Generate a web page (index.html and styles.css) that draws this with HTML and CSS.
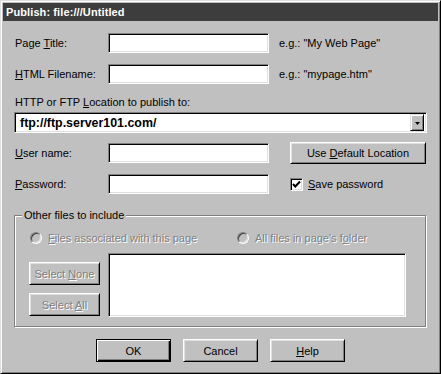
FILE: index.html
```html
<!DOCTYPE html>
<html>
<head>
<meta charset="utf-8">
<link rel="stylesheet" href="styles.css">
</head>
<body>
<div class="window">
  <div class="titlebar">Publish: file:///Untitled</div>
  <div class="content">
    <div class="row first">
      <span class="lbl">Page <u>T</u>itle:</span>
      <div class="field"></div>
      <span class="hint">e.g.: "My Web Page"</span>
    </div>
    <div class="row second">
      <span class="lbl"><u>H</u>TML Filename:</span>
      <div class="field"></div>
      <span class="hint">e.g.: "mypage.htm"</span>
    </div>
    <div class="loc-label">HTTP or FTP <u>L</u>ocation to publish to:</div>
    <div class="combo">
      <span class="combo-text">ftp://ftp.server101.com/</span>
      <span class="combo-btn"><svg width="5" height="3" viewBox="0 0 5 3"><polygon points="0,0 5,0 2.5,3" fill="#000"/></svg></span>
    </div>
    <div class="row third">
      <span class="lbl"><u>U</u>ser name:</span>
      <div class="field"></div>
      <button class="btn wide"><span>Use <u>D</u>efault Location</span></button>
    </div>
    <div class="row fourth">
      <span class="lbl"><u>P</u>assword:</span>
      <div class="field"></div>
      <span class="check"><svg width="9" height="9" viewBox="0 0 9 9"><path d="M1 4 L3.3 6.5 L8 1.5" fill="none" stroke="#000" stroke-width="2"/></svg></span>
      <span class="check-label"><u>S</u>ave password</span>
    </div>
    <div class="group">
      <span class="legend">Other files to include</span>
      <div class="radios">
        <span class="radio-item"><span class="radio"></span><span class="dis"><u>F</u>iles associated with this page</span></span>
        <span class="radio-item"><span class="radio"></span><span class="dis">All files in page's f<u>o</u>lder</span></span>
      </div>
      <div class="group-body">
        <div class="side-btns">
          <button class="btn side"><span class="dis">Select <u>N</u>one</span></button>
          <button class="btn side"><span class="dis">Select <u>A</u>ll</span></button>
        </div>
        <div class="listbox"></div>
      </div>
    </div>
    <div class="actions">
      <button class="btn action default"><span>OK</span></button>
      <button class="btn action"><span>Cancel</span></button>
      <button class="btn action"><span><u>H</u>elp</span></button>
    </div>
  </div>
</div>
</body>
</html>
```
FILE: styles.css
```css
html, body {
  margin: 0;
  padding: 0;
  background: #c0c0c0;
}
.window {
  width: 441px;
  height: 374px;
  box-sizing: border-box;
  border: 1px solid;
  border-color: #dfdfdf #000 #000 #dfdfdf;
  box-shadow: inset 1px 1px 0 #fff, inset -1px -1px 0 #808080;
  padding: 2px;
  background: #c0c0c0;
  font-family: "Liberation Sans", Arial, sans-serif;
  font-size: 11px;
  color: #000;
}
.titlebar {
  height: 18px;
  line-height: 18px;
  background: #3d3d3d;
  color: #fff;
  font-weight: bold;
  font-size: 11px;
  padding-left: 3px;
  letter-spacing: 0.1px;
}
.content {
  padding: 0 12px;
}
u { text-decoration: underline; text-underline-offset: 1px; }
.row {
  display: flex;
  align-items: center;
}
.row.first { margin-top: 12px; height: 20px; }
.row.second { margin-top: 11px; height: 20px; }
.row.third { margin-top: 9px; height: 22px; }
.row.fourth { margin-top: 10px; height: 20px; }
.lbl {
  width: 93px;
  flex: none;
}
.field {
  width: 161px;
  height: 20px;
  box-sizing: border-box;
  background: #fff;
  border: 1px solid;
  border-color: #808080 #fff #fff #808080;
  box-shadow: inset 1px 1px 0 #000, inset -1px -1px 0 #dfdfdf;
  flex: none;
}
.hint {
  margin-left: 10px;
}
.loc-label {
  margin-top: 11px;
  height: 14px;
  line-height: 14px;
}
.combo {
  margin-top: 3px;
  margin-left: -1px;
  width: 413px;
  height: 21px;
  box-sizing: border-box;
  background: #fff;
  border: 1px solid;
  border-color: #808080 #fff #fff #808080;
  box-shadow: inset 1px 1px 0 #000, inset -1px -1px 0 #dfdfdf;
  padding: 1px;
  display: flex;
  align-items: center;
}
.combo-text {
  flex: 1;
  padding-left: 4px;
  font-weight: bold;
  font-size: 12.4px;
}
.combo-btn {
  width: 14px;
  height: 17px;
  box-sizing: border-box;
  background: #c0c0c0;
  border: 1px solid;
  border-color: #dfdfdf #000 #000 #dfdfdf;
  box-shadow: inset 1px 1px 0 #fff, inset -1px -1px 0 #808080;
  display: flex;
  align-items: center;
  justify-content: center;
  margin-right: 1px;
}
.combo-btn svg { display: block; margin-top: 1px; }
.btn {
  font-family: "Liberation Sans", Arial, sans-serif;
  font-size: 11px;
  color: #000;
  background: #c0c0c0;
  border: 1px solid;
  border-color: #fff #000 #000 #fff;
  box-shadow: inset 1px 1px 0 #dfdfdf, inset -1px -1px 0 #808080;
  padding: 0;
  margin: 0;
  box-sizing: border-box;
  display: flex;
  align-items: center;
  justify-content: center;
}
.btn.wide {
  width: 137px;
  height: 22px;
  margin-left: 21px;
}
.check {
  margin-left: 21px;
  width: 13px;
  height: 13px;
  box-sizing: border-box;
  background: #fff;
  border: 1px solid;
  border-color: #808080 #fff #fff #808080;
  box-shadow: inset 1px 1px 0 #000, inset -1px -1px 0 #dfdfdf;
  display: flex;
  align-items: center;
  justify-content: center;
  flex: none;
}
.check svg { display: block; }
.check-label { margin-left: 5px; }
.group {
  position: relative;
  margin-top: 21px;
  margin-left: -1px;
  width: 412px;
  height: 112px;
  box-sizing: border-box;
  border: 1px solid #808080;
  box-shadow: 1px 1px 0 #fff, inset 1px 1px 0 #fff;
}
.legend {
  position: absolute;
  top: -7px;
  left: 7px;
  background: #c0c0c0;
  padding: 0 2px;
  line-height: 13px;
}
.radios {
  margin-top: 15px;
  height: 14px;
  display: grid;
  grid-template-columns: 207px auto;
  padding-left: 15px;
}
.radio-item {
  display: flex;
  align-items: center;
}
.radio {
  width: 12px;
  height: 12px;
  box-sizing: border-box;
  border-radius: 50%;
  border: 1px solid;
  border-color: #808080 #fff #fff #808080;
  box-shadow: inset 1px 1px 0 #404040, inset -1px -1px 0 #dfdfdf;
  background: #c0c0c0;
  margin-right: 6px;
  flex: none;
}
.dis {
  color: #808080;
  text-shadow: 1px 1px 0 #fff;
}
.group-body {
  margin-top: 8px;
  display: flex;
  padding-left: 14px;
}
.side-btns {
  display: flex;
  flex-direction: column;
  gap: 8px;
  padding-top: 9px;
}
.btn.side {
  width: 71px;
  height: 23px;
}
.listbox {
  margin-left: 8px;
  width: 298px;
  height: 64px;
  box-sizing: border-box;
  background: #fff;
  border: 1px solid;
  border-color: #808080 #fff #fff #808080;
  box-shadow: inset 1px 1px 0 #000, inset -1px -1px 0 #dfdfdf;
}
.actions {
  margin-top: 12px;
  display: flex;
  justify-content: center;
  gap: 12px;
}
.btn.action {
  width: 75px;
  height: 23px;
}
.btn.default {
  border-color: #000;
  box-shadow: inset 1px 1px 0 #fff, inset -1px -1px 0 #000, inset -2px -2px 0 #808080;
}
```
